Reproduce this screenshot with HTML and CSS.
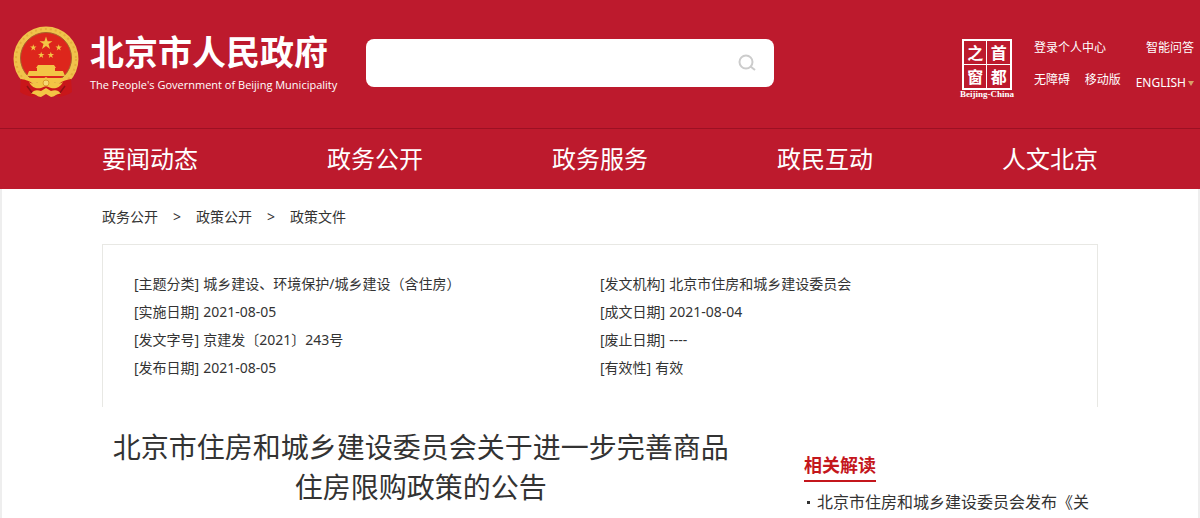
FILE: index.html
```
<!DOCTYPE html>
<html lang="zh-CN">
<head>
  <meta charset="UTF-8">
  <meta name="viewport" content="width=device-width, initial-scale=1">
  <title>北京市人民政府</title>
  <link rel="stylesheet" href="styles.css">
</head>
<body>

<header class="header">
  <div class="top">
    <a class="logo" href="#">
      <svg class="emblem" viewBox="0 0 66 72" aria-hidden="true">
        <circle cx="33" cy="33" r="32.5" fill="#f0c24b"/>
        <circle cx="33" cy="33" r="30" fill="none" stroke="#e5ae3c" stroke-width="2" stroke-dasharray="2 3"/>
        <circle cx="33" cy="32" r="25.5" fill="#dd261c" stroke="#a8612c" stroke-width="1"/>
        <g fill="#f3c545">
          <polygon id="star" points="33,10.5 34.6,15.2 39.5,15.2 35.5,18.1 37,23 33,20 29,23 30.5,18.1 26.5,15.2 31.4,15.2"/>
          <use href="#star" transform="translate(3.8 13) scale(.5)"/>
          <use href="#star" transform="translate(29.2 13) scale(.5)"/>
          <use href="#star" transform="translate(11.7 20.5) scale(.5)"/>
          <use href="#star" transform="translate(21.3 20.5) scale(.5)"/>
          <!-- gate -->
          <path d="M25 39h16l2 3H23z"/>
          <path d="M24 42h18v3H24z"/>
          <path d="M16 45h34l2 5H14z"/>
          <path d="M13 52h40l-3 4H16z"/>
        </g>
        <!-- ribbon -->
        <path d="M8 53c5 1 9 2 12 5h26c3-3 7-4 12-5l1 13c-4 3-9 4-13 5l-5-4H25l-5 4c-4-1-9-2-13-5z" fill="#c9161a"/>
        <path d="M14 60l6 8M52 60l-6 8" stroke="#8e1014" stroke-width="1.5"/>
        <path d="M16 56c6 4 9 0 12-2l5-3 5 3c3 2 6 6 12 2-3 6-8 7-12 6l-5-2-5 2c-4 1-9 0-12-6z" fill="#f3c545"/>
        <path d="M18 68c3-5 7-4 10-3l5-3 5 3c3-1 7-2 10 3-4-1-6 3-10 3l-5-3-5 3c-4 0-6-4-10-3z" fill="#f3c545"/>
        <circle cx="33" cy="57" r="3" fill="#f7d873" stroke="#d99a2c"/>
      </svg>
      <span class="logo-text">
        <strong>北京市人民政府</strong>
        <span class="logo-en">The People's Government of Beijing Municipality</span>
      </span>
    </a>

    <form class="search">
      <input type="text" aria-label="搜索">
      <button type="button" aria-label="搜索">
        <svg viewBox="0 0 18 18" width="18" height="18" fill="none" stroke="#ccc" stroke-width="2">
          <circle cx="8" cy="8" r="6.5"/>
          <path d="M12.5 12.5l4.5 3.5"/>
        </svg>
      </button>
    </form>

    <a class="capital" href="#">
      <span class="seal"><b>之</b><b>首</b><b>窗</b><b>都</b></span>
      <span class="seal-en">Beijing-China</span>
    </a>

    <div class="tools">
      <div class="tools-row">
        <a href="#">登录个人中心</a>
        <a href="#">智能问答</a>
      </div>
      <div class="tools-row">
        <a href="#">无障碍</a>
        <a href="#">移动版</a>
        <a class="lang" href="#">ENGLISH</a>
      </div>
    </div>
  </div>

  <nav class="nav">
    <div class="container nav-list">
      <a href="#">要闻动态</a>
      <a href="#">政务公开</a>
      <a href="#">政务服务</a>
      <a href="#">政民互动</a>
      <a href="#">人文北京</a>
    </div>
  </nav>
</header>

<main class="main">
  <div class="container">
    <div class="crumbs">
      <a href="#">政务公开</a>
      <span>&gt;</span>
      <a href="#">政策公开</a>
      <span>&gt;</span>
      <a href="#">政策文件</a>
    </div>

    <dl class="info">
      <div><dt>[主题分类]</dt><dd>城乡建设、环境保护/城乡建设（含住房）</dd></div>
      <div><dt>[发文机构]</dt><dd>北京市住房和城乡建设委员会</dd></div>
      <div><dt>[实施日期]</dt><dd>2021-08-05</dd></div>
      <div><dt>[成文日期]</dt><dd>2021-08-04</dd></div>
      <div><dt>[发文字号]</dt><dd>京建发〔2021〕243号</dd></div>
      <div><dt>[废止日期]</dt><dd>----</dd></div>
      <div><dt>[发布日期]</dt><dd>2021-08-05</dd></div>
      <div><dt>[有效性]</dt><dd>有效</dd></div>
    </dl>

    <div class="content">
      <h1 class="title">北京市住房和城乡建设委员会关于进一步完善商品<br>住房限购政策的公告</h1>
      <aside class="related">
        <h2>相关解读</h2>
        <ul>
          <li><a href="#">北京市住房和城乡建设委员会发布《关</a></li>
        </ul>
      </aside>
    </div>
  </div>
</main>

</body>
</html>
```

FILE: styles.css
```
* {
  box-sizing: border-box;
}
body {
  margin: 0;
  min-height: 100vh;
  display: flex;
  flex-direction: column;
  background: #eee;
  color: #333;
  font-family: "Noto Sans", "Noto Sans CJK SC", sans-serif;
  font-size: 14px;
}
a {
  color: inherit;
  text-decoration: none;
}
.container {
  width: 90%;
  max-width: 996px;
  margin: 0 auto;
}

/* header */
.header {
  background: #bd1a2d;
  color: #fff;
}
.top {
  display: flex;
  align-items: flex-start;
  padding: 26px 6px 29px 13px;
}
.logo {
  display: flex;
  gap: 11px;
}
.emblem {
  width: 66px;
  height: 72px;
}
.logo-text {
  display: flex;
  flex-direction: column;
  padding-top: 6px;
  white-space: nowrap;
}
.logo-text strong {
  font-size: 34px;
  line-height: 40px;
}
.logo-en {
  font-family: "Open Sans", sans-serif;
  font-size: 11px;
  line-height: 26px;
}
.search {
  display: flex;
  flex: 0 1 408px;
  height: 48px;
  margin: 13px auto 0 29px;
  background: #fff;
  border-radius: 8px;
}
.search input {
  flex: 1;
  min-width: 0;
  padding: 0 16px;
  border: none;
  background: none;
  font-size: 16px;
  outline: none;
}
.search button {
  display: flex;
  align-items: center;
  padding: 0 18px;
  border: none;
  background: none;
  cursor: pointer;
}
.capital {
  display: flex;
  flex-direction: column;
  align-items: center;
  margin: 13px 20px 0 0;
}
.seal {
  display: grid;
  grid-template-columns: 1fr 1fr;
  gap: 1px;
  width: 50px;
  border: 2px solid #fff;
  background: #fff;
}
.seal b {
  background: #bd1a2d;
  font-family: "Noto Sans CJK SC", sans-serif;
  font-size: 16px;
  line-height: 23px;
  text-align: center;
}
.seal-en {
  font-family: "Liberation Serif", serif;
  font-size: 9px;
  font-weight: bold;
  line-height: 9px;
}
.tools {
  width: 160px;
  padding-top: 12px;
  font-size: 12px;
  line-height: 20px;
}
.tools-row {
  display: flex;
  justify-content: space-between;
  margin-bottom: 12px;
}
.tools-row:last-child {
  margin-bottom: 0;
}
.lang {
  display: flex;
  align-items: center;
  gap: 2px;
  padding-top: 3px;
}
.lang::after {
  content: "";
  border: 3px solid transparent;
  border-top: 5px solid #d9a066;
  border-bottom: 0;
}

/* nav */
.nav {
  border-top: 1px solid #9c1023;
}
.nav-list {
  display: flex;
  justify-content: space-between;
  font-size: 24px;
  line-height: 60px;
}

/* page */
.main {
  flex: 1;
  margin: 0 2px;
  background: #fff;
}
.crumbs {
  display: flex;
  gap: 15px;
  padding: 17px 0;
  line-height: 21px;
}
.info {
  display: grid;
  grid-template-columns: 1fr 1fr;
  margin: 0;
  padding: 25px 31px;
  border: 1px solid #e8e8e4;
  border-bottom: none;
  line-height: 28px;
}
.info div {
  display: flex;
  gap: 4px;
}
.info dd {
  margin: 0;
}
.content {
  display: flex;
  justify-content: space-between;
  padding-top: 20px;
}
.title {
  width: 64%;
  margin: 0;
  font-size: 28px;
  font-weight: normal;
  line-height: 40px;
  text-align: center;
}
.related {
  width: 294px;
  padding-top: 23px;
}
.related h2 {
  display: inline-block;
  margin: 0;
  border-bottom: 2px solid #c4161c;
  color: #c4161c;
  font-size: 18px;
  line-height: 30px;
}
.related ul {
  margin: 0;
  padding: 0;
  list-style: none;
  font-size: 16px;
  line-height: 28px;
}
.related li {
  display: flex;
  align-items: center;
  gap: 7px;
  padding: 6px 0 0 3px;
}
.related li::before {
  content: "";
  width: 3px;
  height: 3px;
  background: #333;
}
```
